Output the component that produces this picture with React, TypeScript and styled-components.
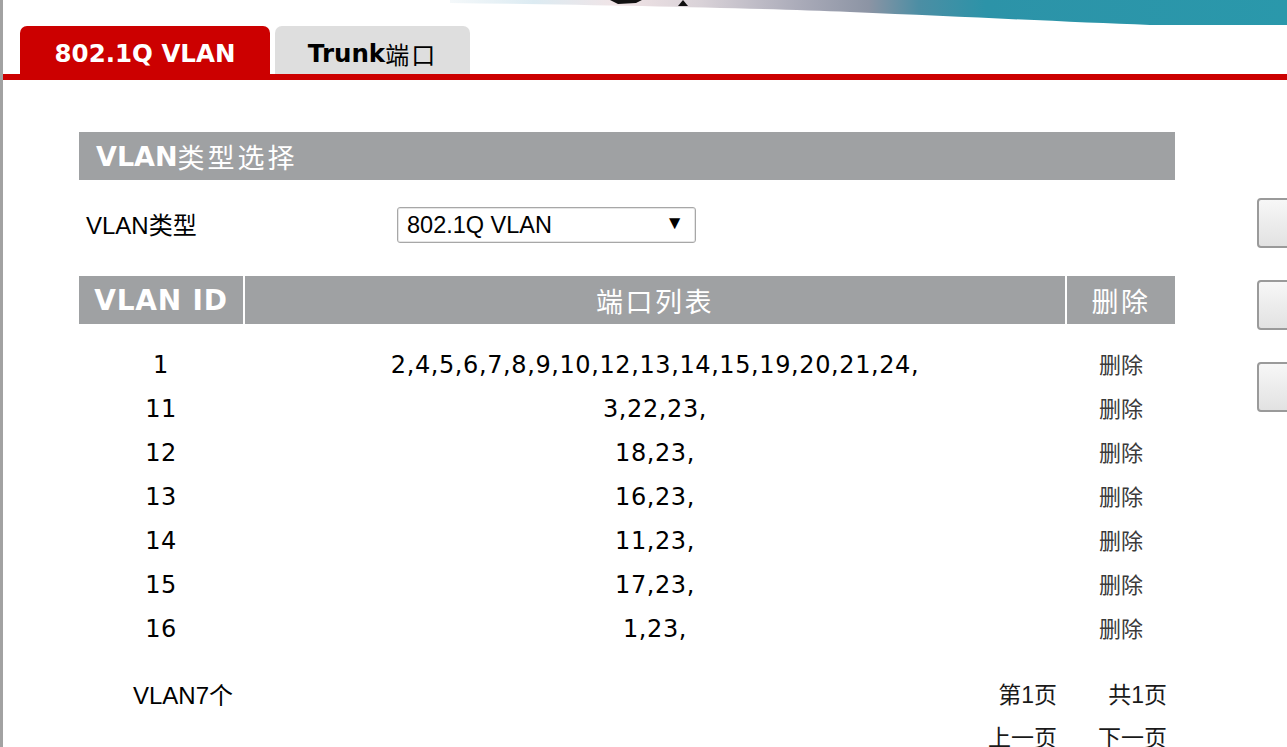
import React from "react";
import styled, { createGlobalStyle } from "styled-components";

const GlobalStyle = createGlobalStyle`
  html, body {
    margin: 0;
    padding: 0;
    background: #ffffff;
    overflow: hidden;
  }
  body {
    font-family: "Liberation Sans", "Noto Sans CJK SC", sans-serif;
    color: #000;
  }
`;

const CJK = `"Noto Sans CJK SC", sans-serif`;
const VERD = `"DejaVu Sans", "Noto Sans CJK SC", sans-serif`;
const ARIAL = `"Liberation Sans", "Noto Sans CJK SC", sans-serif`;

const Page = styled.div`
  width: 1284px;
  height: 747px;
  border-left: 3px solid #a2a2a2;
  display: flex;
  flex-direction: column;
  overflow: hidden;
`;

const Banner = styled.div`
  height: 26px;
  display: flex;
  justify-content: flex-end;
`;

const TabBar = styled.div`
  display: flex;
  gap: 5px;
  padding-left: 17px;
  height: 48px;
  border-bottom: 6px solid #cc0000;
`;

const Tab = styled.div<{ $active?: boolean }>`
  width: ${(p) => (p.$active ? "250px" : "195px")};
  height: 48px;
  border-radius: 7px 7px 0 0;
  background: ${(p) => (p.$active ? "#cc0000" : "#dedede")};
  color: ${(p) => (p.$active ? "#ffffff" : "#000000")};
  font-family: ${VERD};
  font-weight: bold;
  font-size: 24.5px;
  display: flex;
  align-items: center;
  justify-content: center;
  padding-top: 6px;
  box-sizing: border-box;
  white-space: nowrap;
`;

const TabCjk = styled.span`
  font-family: ${CJK};
  font-weight: normal;
  font-size: 24px;
  letter-spacing: 2px;
`;

const Body = styled.div`
  display: flex;
`;

const Content = styled.div`
  width: 1096px;
  margin-left: 76px;
  margin-top: 52px;
  display: flex;
  flex-direction: column;
`;

const SectionHeader = styled.div`
  height: 48px;
  background: #9fa1a3;
  color: #fff;
  display: flex;
  align-items: center;
  padding-left: 17px;
  font-family: ${VERD};
  font-weight: bold;
  font-size: 27px;
`;

const HeaderCjk = styled.span`
  font-family: ${CJK};
  font-weight: normal;
  font-size: 27px;
  letter-spacing: 3px;
`;

const FormRow = styled.div`
  display: flex;
  align-items: center;
  padding: 27px 0 33px 7px;
`;

const Label = styled.div`
  width: 311px;
  font-family: ${ARIAL};
  font-size: 24px;
  margin-top: -3px;
`;

const Select = styled.div`
  width: 299px;
  height: 36px;
  box-sizing: border-box;
  border: 1px solid #a7a7a7;
  border-radius: 3px;
  box-shadow: inset 0 0 0 1px #e6e6e6;
  display: flex;
  align-items: center;
  justify-content: space-between;
  padding: 0 11px 0 9px;
  font-family: ${ARIAL};
  font-size: 23.5px;
`;

const Arrow = styled.span`
  font-size: 19px;
  margin-top: -4px;
`;

const Grid = styled.div`
  display: grid;
  grid-template-columns: 164px 820px 108px;
  column-gap: 2px;
`;

const HeadCell = styled.div<{ $cjk?: boolean }>`
  height: 48px;
  background: #9fa1a3;
  color: #fff;
  display: flex;
  align-items: center;
  justify-content: center;
  font-family: ${(p) => (p.$cjk ? CJK : VERD)};
  font-weight: ${(p) => (p.$cjk ? "normal" : "bold")};
  font-size: ${(p) => (p.$cjk ? "27px" : "28px")};
  letter-spacing: ${(p) => (p.$cjk ? "2.5px" : "0.8px")};
`;

const Rows = styled.div`
  display: flex;
  flex-direction: column;
  margin-top: 19px;
`;

const Cell = styled.div<{ $cjk?: boolean }>`
  height: 44px;
  display: flex;
  align-items: center;
  justify-content: center;
  box-sizing: border-box;
  padding-bottom: ${(p) => (p.$cjk ? "5px" : "0")};
  font-family: ${(p) => (p.$cjk ? CJK : VERD)};
  font-size: ${(p) => (p.$cjk ? "22px" : "24px")};
  color: ${(p) => (p.$cjk ? "#3a3a3a" : "#000")};
  letter-spacing: ${(p) => (p.$cjk ? "0" : "0.6px")};
`;

const Footer = styled.div`
  margin-top: 20px;
  display: flex;
  justify-content: space-between;
  align-items: flex-start;
`;

const Count = styled.div`
  height: 44px;
  display: flex;
  align-items: center;
  padding-left: 54px;
  font-family: ${ARIAL};
  font-size: 24px;
`;

const Pager = styled.div`
  display: grid;
  grid-template-columns: 110px 110px;
  grid-auto-rows: 43px;
  margin-right: 8px;
`;

const PagerItem = styled.div`
  display: flex;
  align-items: center;
  justify-content: flex-end;
  font-family: ${ARIAL};
  font-size: 23px;
  color: #1a1a1a;
`;

const SideButtons = styled.div`
  margin-left: 82px;
  padding-top: 118px;
  display: flex;
  flex-direction: column;
  gap: 32px;
`;

const SideButton = styled.div`
  width: 60px;
  height: 50px;
  box-sizing: border-box;
  border: 2px solid #9a9a9a;
  border-radius: 4px;
  background: linear-gradient(#f7f7f7, #e2e2e2);
`;

const rows: [string, string][] = [
  ["1", "2,4,5,6,7,8,9,10,12,13,14,15,19,20,21,24,"],
  ["11", "3,22,23,"],
  ["12", "18,23,"],
  ["13", "16,23,"],
  ["14", "11,23,"],
  ["15", "17,23,"],
  ["16", "1,23,"],
];

const BannerArt = () => (
  <svg width="837" height="26" viewBox="0 0 837 26">
    <defs>
      <linearGradient id="bg" x1="0" y1="0" x2="1" y2="0">
        <stop offset="0" stopColor="#f4f8fa" />
        <stop offset="0.1" stopColor="#dcebf2" />
        <stop offset="0.2" stopColor="#f1e4e6" />
        <stop offset="0.3" stopColor="#d9d2d8" />
        <stop offset="0.42" stopColor="#a9aab8" />
        <stop offset="0.5" stopColor="#8c94a4" />
        <stop offset="0.56" stopColor="#4c8ea4" />
        <stop offset="0.64" stopColor="#2c93a8" />
        <stop offset="1" stopColor="#2a98ab" />
      </linearGradient>
    </defs>
    <path
      d="M0 0 H837 V25 L700 25 C620 22 520 17 400 12 C300 8 150 5 0 3 Z"
      fill="url(#bg)"
    />
    <path d="M160 0 H192 L186 3 L168 4 Z" fill="#111" />
    <path d="M228 6 L233 0 L238 6 Z" fill="#111" />
  </svg>
);

export default function App() {
  return (
    <>
      <GlobalStyle />
      <Page>
        <Banner>
          <BannerArt />
        </Banner>
        <TabBar>
          <Tab $active>802.1Q VLAN</Tab>
          <Tab>
            Trunk<TabCjk>端口</TabCjk>
          </Tab>
        </TabBar>
        <Body>
          <Content>
            <SectionHeader>
              VLAN<HeaderCjk>类型选择</HeaderCjk>
            </SectionHeader>
            <FormRow>
              <Label>VLAN类型</Label>
              <Select>
                <span>802.1Q VLAN</span>
                <Arrow>▼</Arrow>
              </Select>
            </FormRow>
            <Grid>
              <HeadCell>VLAN ID</HeadCell>
              <HeadCell $cjk>端口列表</HeadCell>
              <HeadCell $cjk>删除</HeadCell>
            </Grid>
            <Rows>
              {rows.map(([id, ports]) => (
                <Grid key={id}>
                  <Cell>{id}</Cell>
                  <Cell>{ports}</Cell>
                  <Cell $cjk>删除</Cell>
                </Grid>
              ))}
            </Rows>
            <Footer>
              <Count>VLAN7个</Count>
              <Pager>
                <PagerItem>第1页</PagerItem>
                <PagerItem>共1页</PagerItem>
                <PagerItem>上一页</PagerItem>
                <PagerItem>下一页</PagerItem>
              </Pager>
            </Footer>
          </Content>
          <SideButtons>
            <SideButton />
            <SideButton />
            <SideButton />
          </SideButtons>
        </Body>
      </Page>
    </>
  );
}
